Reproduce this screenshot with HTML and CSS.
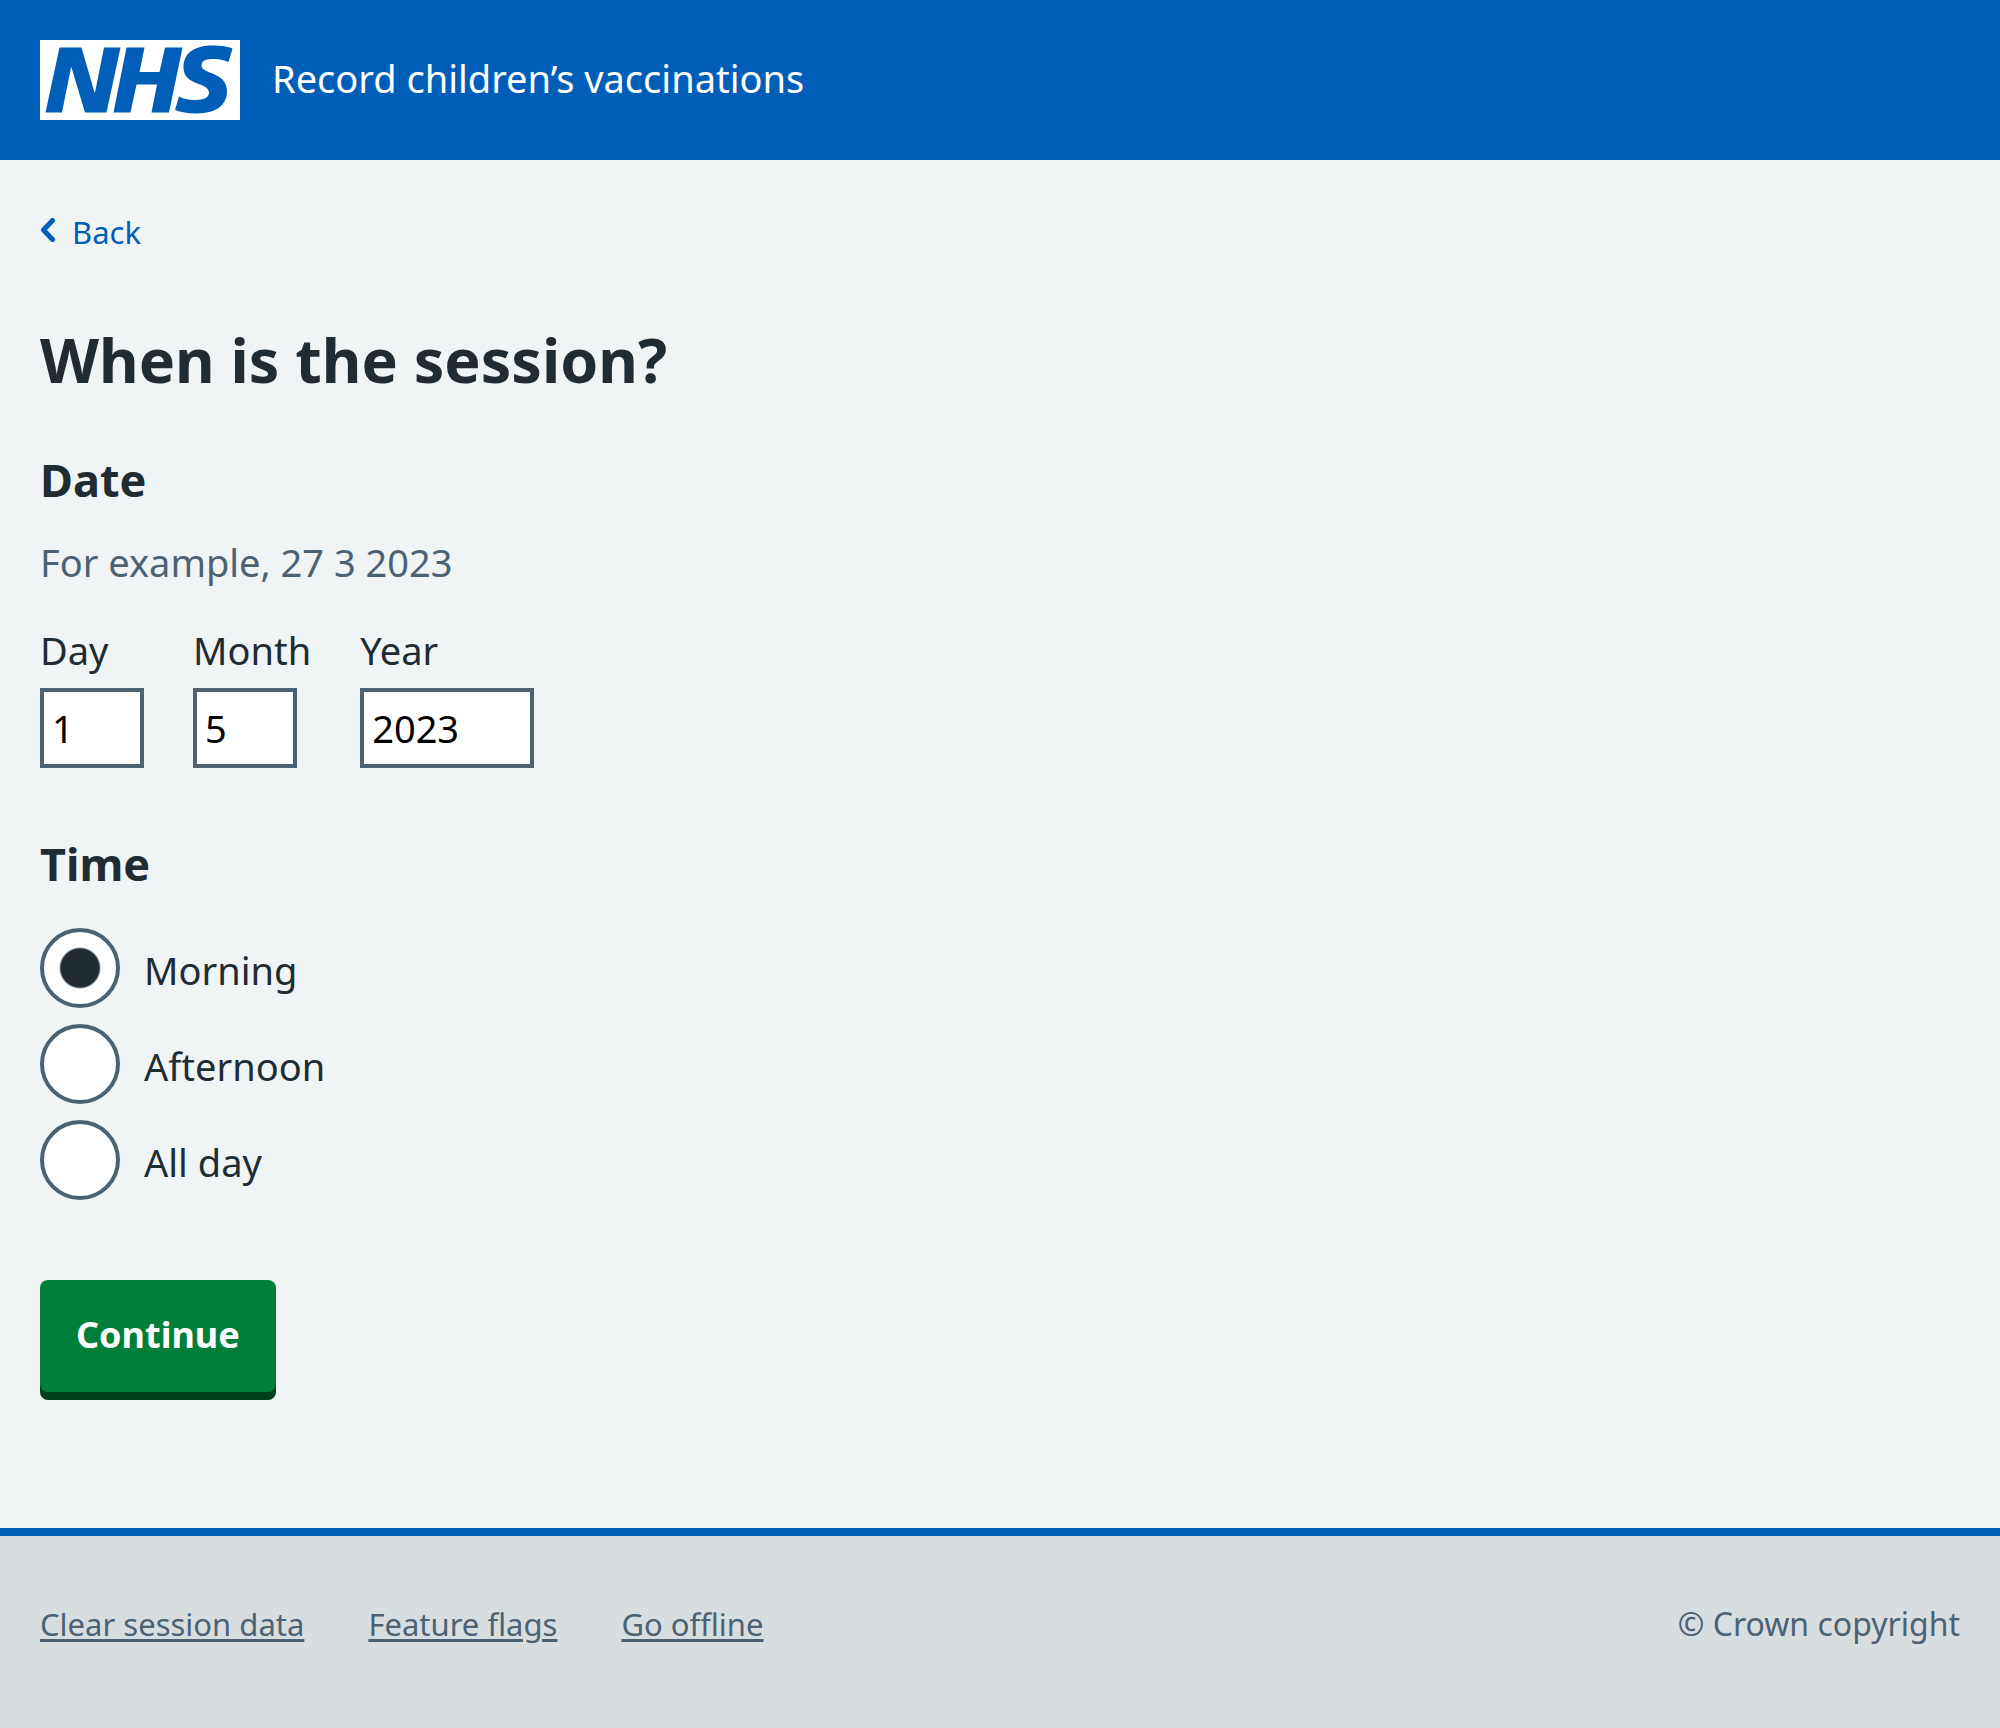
FILE: index.html
```html
<!DOCTYPE html>
<html lang="en">
<head>
<meta charset="utf-8">
<title>When is the session?</title>
<link rel="stylesheet" href="styles.css">
</head>
<body>
<header class="header">
  <svg class="logo" viewBox="0 0 40 16" role="img" aria-label="NHS">
    <path fill="#fff" d="M0 0h40v16H0z"/>
    <path fill="#005eb8" d="M3.9 1.5h4.4l2.6 9h.1l1.8-9h3.3l-2.8 13H9l-2.7-9h-.1l-1.8 9H1.1M17.3 1.5h3.6l-1 4.9h4L25 1.5h3.5l-2.7 13h-3.5l1.1-5.6h-4.1l-1.2 5.6h-3.4M37.7 4.4c-.7-.3-1.6-.6-2.9-.6-1.4 0-2.5.2-2.5 1.3 0 1.8 5.1 1.2 5.1 5.1 0 3.6-3.3 4.5-6.4 4.5-1.3 0-2.9-.3-4-.7l.8-2.7c.7.4 2.1.7 3.2.7s2.8-.2 2.8-1.5c0-2.1-5.1-1.3-5.1-5 0-3.4 2.9-4.4 5.8-4.4 1.6 0 3.1.2 4 .6"/>
  </svg>
  <span class="service">Record children’s vaccinations</span>
</header>
<main class="main">
  <a class="back" href="#">
    <svg class="chevron" viewBox="0 0 16 24" aria-hidden="true"><path d="M12.5 2.5 3.5 12l9 9.5" fill="none" stroke="#005eb8" stroke-width="5" stroke-linecap="round" stroke-linejoin="round"/></svg>
    <span class="back-text">Back</span>
  </a>
  <form class="form">
    <h1 class="title">When is the session?</h1>
    <fieldset class="group">
      <legend class="legend">Date</legend>
      <p class="hint">For example, 27 3 2023</p>
      <div class="date">
        <div class="field"><label for="day">Day</label><input class="input" id="day" type="text" value="1"></div>
        <div class="field"><label for="month">Month</label><input class="input" id="month" type="text" value="5"></div>
        <div class="field"><label for="year">Year</label><input class="input input-year" id="year" type="text" value="2023"></div>
      </div>
    </fieldset>
    <fieldset class="group">
      <legend class="legend">Time</legend>
      <div class="radios">
        <label class="choice"><input class="radio" type="radio" name="time" checked><span class="choice-text">Morning</span></label>
        <label class="choice"><input class="radio" type="radio" name="time"><span class="choice-text">Afternoon</span></label>
        <label class="choice"><input class="radio" type="radio" name="time"><span class="choice-text">All day</span></label>
      </div>
    </fieldset>
    <button class="button" type="button">Continue</button>
  </form>
</main>
<footer class="footer">
  <nav class="links">
    <a href="#">Clear session data</a>
    <a href="#">Feature flags</a>
    <a href="#">Go offline</a>
  </nav>
  <span>© Crown copyright</span>
</footer>
</body>
</html>
```
FILE: styles.css
```css
* { box-sizing: border-box; }
body {
  margin: 0;
  min-height: 100vh;
  display: flex;
  flex-direction: column;
  background: #f0f4f5;
  color: #212b32;
  font: 38px/56px "Noto Sans", "Open Sans", sans-serif;
}
.header {
  display: flex;
  align-items: center;
  gap: 32px;
  padding: 40px;
  background: #005eb8;
  color: #fff;
}
.logo { width: 200px; height: 80px; }
.service { padding-bottom: 4px; }
.main { padding: 48px 40px 136px; }
.back {
  display: flex;
  align-items: center;
  gap: 16px;
  width: fit-content;
  color: #005eb8;
  font-size: 31px;
  line-height: 40px;
  text-decoration: none;
}
.back-text { padding-top: 4px; }
.chevron { width: 16px; height: 24px; }
.title { margin: 72px 0 52px; font-size: 61px; line-height: 72px; font-weight: 700; }
.group { margin: 0 0 64px; padding: 0; border: 0; }
.legend { margin: 0 0 22px; padding: 0; font-size: 45px; line-height: 64px; font-weight: 700; }
.hint { margin: 0 0 32px; color: #4c6272; }
.date { display: flex; gap: 49px; }
.field { display: flex; flex-direction: column; gap: 10px; }
.input {
  width: 104px;
  height: 80px;
  padding: 8px;
  border: 4px solid #4c6272;
  border-radius: 0;
  background: #fff;
  color: #000;
  font: inherit;
}
.input-year { width: 174px; }
.radios { display: flex; flex-direction: column; align-items: flex-start; gap: 16px; padding-top: 10px; }
.choice { display: flex; align-items: center; gap: 24px; }
.choice-text { padding-top: 4px; }
.radio {
  appearance: none;
  width: 80px;
  height: 80px;
  margin: 0;
  border: 4px solid #4c6272;
  border-radius: 50%;
  background: #fff;
}
.radio:checked { background: radial-gradient(circle, #212b32 19px, #fff 21px); }
.button {
  display: block;
  margin: 80px 0 0;
  padding: 27px 36px 29px;
  border: 0;
  border-radius: 8px;
  box-shadow: 0 8px 0 #00401e;
  background: #007f3b;
  color: #fff;
  font: inherit;
  font-size: 36px;
  font-weight: 700;
}
.footer {
  flex: 1;
  display: flex;
  justify-content: space-between;
  align-items: flex-start;
  padding: 64px 40px;
  border-top: 8px solid #005eb8;
  background: #d8dde0;
  color: #4c6272;
  font-size: 32px;
  line-height: 48px;
}
.links { display: flex; gap: 64px; font-size: 31px; }
.links a { color: inherit; text-underline-offset: 3px; text-decoration-thickness: 3px; }
```
